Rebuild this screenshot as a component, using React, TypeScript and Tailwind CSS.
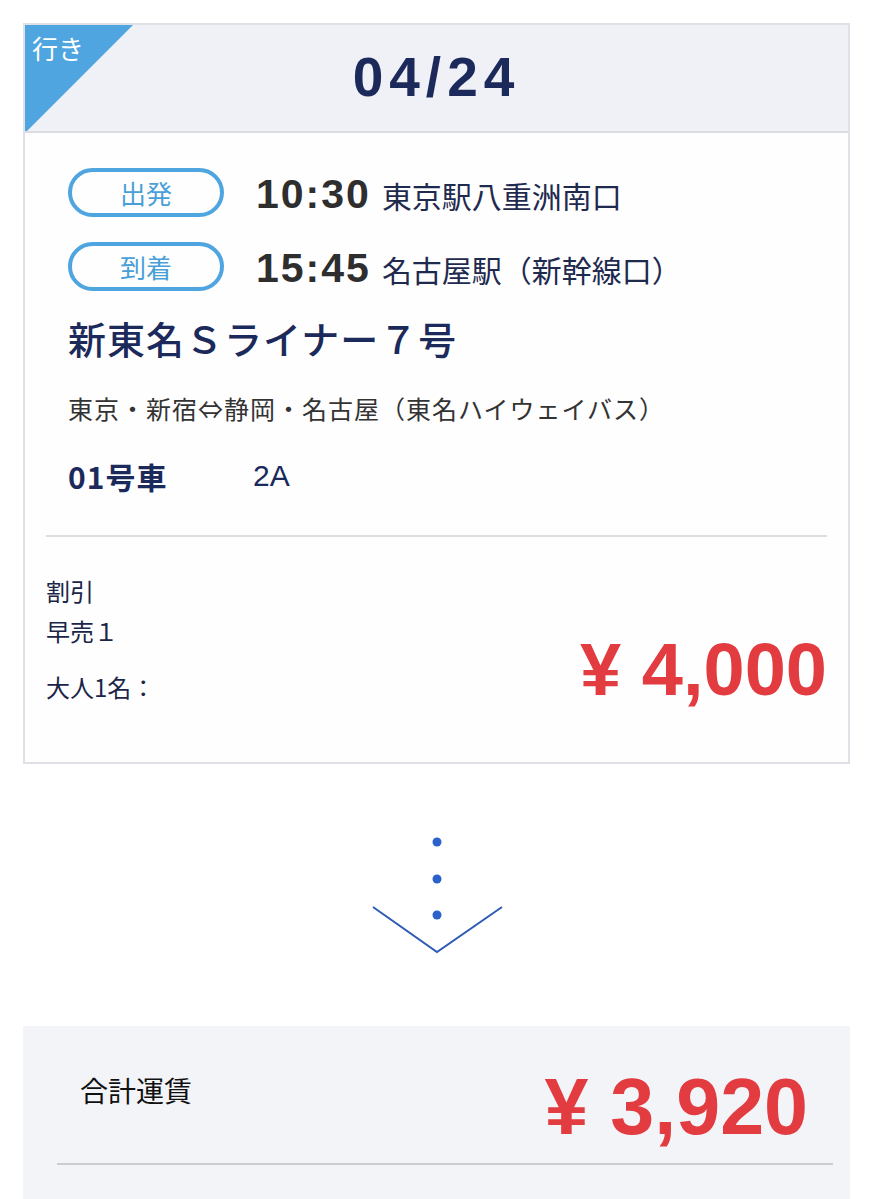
const jp = { fontFamily: '"Noto Sans CJK JP", "Noto Sans", sans-serif' }
const num = { fontFamily: '"Liberation Sans", Arial, sans-serif' }

function Pill({ label }: { label: string }) {
  return (
    <div className="flex h-[49px] w-[156px] shrink-0 items-center justify-center rounded-full border-[4px] border-[#4ea5e0] text-[26px] leading-none text-[#4a9fd8]">
      {label}
    </div>
  )
}

function TimeRow({ label, time, place }: { label: string; time: string; place: string }) {
  return (
    <div className="flex h-[49px] items-center gap-[32px]">
      <Pill label={label} />
      <p className="flex items-baseline gap-[11px] pt-[4px]">
        <span className="text-[41px] font-bold leading-none tracking-[2px] text-[#2e2e2e]" style={num}>
          {time}
        </span>
        <span className="text-[30px] leading-none text-[#1f2a4f]">{place}</span>
      </p>
    </div>
  )
}

function ArrowDown() {
  return (
    <div className="flex justify-center pb-[72px] pt-[60px]">
      <svg width="140" height="130" viewBox="0 0 140 130">
        <circle cx="70" cy="18" r="4.5" fill="#2a62c9" />
        <circle cx="70" cy="55" r="4.5" fill="#2a62c9" />
        <circle cx="70" cy="91" r="4.5" fill="#2a62c9" />
        <polyline points="6,83 70,128 135,83" fill="none" stroke="#2d5bb5" strokeWidth="2" />
      </svg>
    </div>
  )
}

export default function App() {
  return (
    <div className="min-h-[1199px] bg-white pt-[23px]" style={jp}>
      {/* TICKET CARD */}
      <div className="mx-[23px] border-2 border-[#e0e1e6] bg-[#fefefe]">
        <div className="relative flex h-[108px] items-center justify-center overflow-hidden border-b-2 border-[#dcdde3] bg-[#f0f1f6]">
          <div className="absolute left-0 top-0 h-[108px] w-[108px] bg-[#4ea5e0] [clip-path:polygon(0_0,100%_0,0_100%)]" />
          <span className="absolute left-[7px] top-[6px] text-[26px] leading-[34px] text-white">行き</span>
          <p className="pb-[2px] text-[55px] font-bold leading-none tracking-[6px] text-[#1b2a5a]" style={num}>
            04/24
          </p>
        </div>

        <div className="px-[43px] pt-[35px]">
          <TimeRow label="出発" time="10:30" place="東京駅八重洲南口" />
          <div className="h-[25px]" />
          <TimeRow label="到着" time="15:45" place="名古屋駅（新幹線口）" />
          <p className="mt-[24px] text-[38px] font-medium leading-[46px] tracking-[1px] text-[#1b2a5a]">新東名Ｓライナー７号</p>
          <p className="mt-[31px] text-[25px] leading-[32px] tracking-[1px] text-[#333]">東京・新宿⇔静岡・名古屋（東名ハイウェイバス）</p>
          <div className="mt-[34px] flex items-center text-[30px] leading-[36px] text-[#1b2a5a]">
            <span className="w-[185px] font-bold tracking-[1px]">01号車</span>
            <span style={num}>2A</span>
          </div>
        </div>

        <div className="mx-[21px] mt-[41px] border-t-2 border-[#dedede]" />

        <div className="flex items-end justify-between px-[21px] pb-[55px] pt-[34px]">
          <div className="text-[24px] leading-[40px] text-[#1b2548]">
            <p>割引</p>
            <p>早売１</p>
            <p className="mt-[16px]">大人1名：</p>
          </div>
          <p className="text-[74px] font-bold leading-none text-[#e23b40]" style={num}>
            ¥ 4,000
          </p>
        </div>
      </div>

      <ArrowDown />

      {/* TOTAL */}
      <div className="mx-[23px] bg-[#f3f4f8] pl-[34px] pr-[17px] pt-[41px]">
        <div className="flex items-start justify-between pl-[23px] pr-[25px]">
          <p className="mt-[5px] text-[28px] leading-[36px] text-[#111]">合計運賃</p>
          <p className="text-[79px] font-bold leading-none text-[#e23b40]" style={num}>
            ¥ 3,920
          </p>
        </div>
        <div className="mt-[17px] border-t-2 border-[#cbccd0]" />
        <div className="h-[40px]" />
      </div>
    </div>
  )
}
